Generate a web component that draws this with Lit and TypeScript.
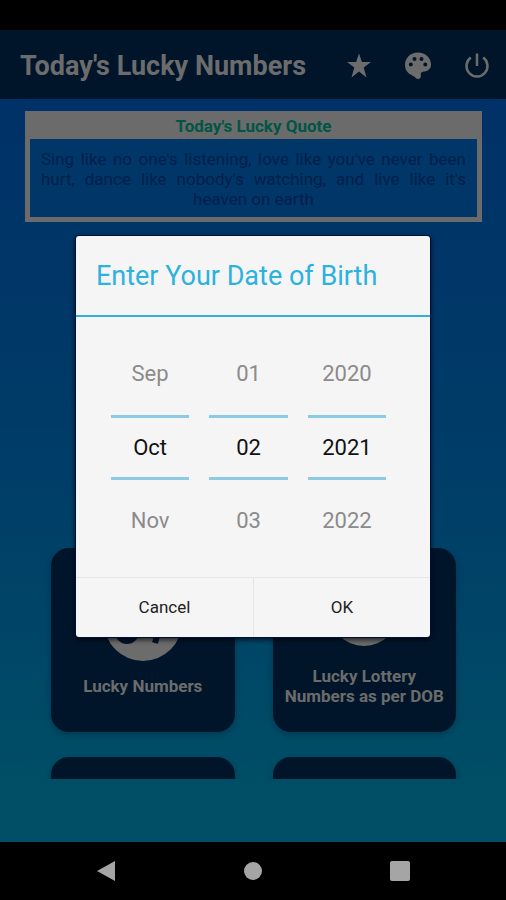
import { LitElement, html, css, svg } from "lit";
import { customElement, state } from "lit/decorators.js";

interface Wheel {
  label: string;
  prev: string;
  value: string;
  next: string;
}

@customElement("date-wheel")
class DateWheel extends LitElement {
  static properties = { wheel: { attribute: false } };
  declare wheel: Wheel;

  static styles = css`
    :host {
      display: flex;
      flex-direction: column;
      min-width: 0;
    }
    .step,
    .value {
      font: 22px "Roboto", sans-serif;
      background: none;
      border: 0;
      padding: 0;
      margin: 0;
      width: 100%;
      box-sizing: border-box;
      text-align: center;
      border-radius: 0;
    }
    .step {
      height: 82px;
      color: #8b8b8b;
    }
    .value {
      height: 65px;
      color: #111;
      border-top: 3px solid #8dcbe4;
      border-bottom: 3px solid #8dcbe4;
      outline: none;
    }
  `;

  render() {
    const w = this.wheel;
    return html`
      <button class="step" aria-label="Previous ${w.label}">${w.prev}</button>
      <input class="value" aria-label=${w.label} .value=${w.value} />
      <button class="step" aria-label="Next ${w.label}">${w.next}</button>
    `;
  }
}

@customElement("app-root")
class AppRoot extends LitElement {
  @state() wheels: Wheel[] = [
    { label: "Month", prev: "Sep", value: "Oct", next: "Nov" },
    { label: "Day", prev: "01", value: "02", next: "03" },
    { label: "Year", prev: "2020", value: "2021", next: "2022" },
  ];

  static styles = css`
    :host {
      display: flex;
      flex-direction: column;
      min-height: 100vh;
      background: #000;
      font-family: "Roboto", sans-serif;
    }
    * {
      box-sizing: border-box;
    }
    button {
      font: inherit;
      border: 0;
      padding: 0;
      margin: 0;
      background: none;
    }
    .status {
      height: 30px;
    }
    .screen {
      flex: 1;
      display: flex;
      flex-direction: column;
      position: relative;
      background: #003168;
    }
    .bar {
      display: flex;
      align-items: center;
      height: 69px;
      padding: 2px 0 0 20px;
      background: #00152a;
      color: #6c6c6c;
    }
    .bar h1 {
      flex: 1;
      margin: 0;
      font-size: 27px;
      line-height: 32px;
      font-weight: 700;
      white-space: nowrap;
    }
    .tool {
      width: 59px;
      height: 59px;
      display: grid;
      place-items: center;
      color: inherit;
    }
    .tool svg {
      width: 28px;
      height: 28px;
      display: block;
    }
    .page {
      flex: 1;
      display: flex;
      flex-direction: column;
      padding: 12px 24px 63px 25px;
      background: linear-gradient(#003168, #003d68 50%, #004f66 95%);
    }
    .quote {
      background: #6b6b6b;
      padding: 0 5px 5px;
    }
    .quote h2 {
      margin: 0;
      padding-top: 2px;
      font-size: 17px;
      line-height: 26px;
      text-align: center;
      color: #005545;
    }
    .quote p {
      margin: 0;
      padding: 10px 11px 8px;
      background: #003668;
      color: #001f4a;
      font-size: 17px;
      line-height: 20px;
      text-align: justify;
      text-align-last: center;
    }
    .cards {
      margin-top: auto;
      height: 231px;
      overflow: hidden;
      display: grid;
      grid-template-columns: 1fr 1fr;
      grid-auto-rows: 184px;
      gap: 25px 38px;
      padding: 0 26px;
    }
    .card {
      display: flex;
      flex-direction: column;
      align-items: center;
      justify-content: center;
      gap: 14px;
      padding: 0 10px 2px;
      border-radius: 18px;
      background: #00152a;
      color: #6c6c6c;
      font-size: 17px;
      line-height: 20px;
      font-weight: 700;
      box-shadow: 0 3px 6px rgba(0, 20, 40, 0.3);
    }
    .card svg {
      width: 80px;
      height: 80px;
    }
    .overlay {
      position: absolute;
      inset: 0;
      display: grid;
      place-items: center;
    }
    .dialog {
      width: 70%;
      background: #f5f5f5;
      border-radius: 3px;
      box-shadow: 0 0 0 1px #00103a, 0 2px 5px 1px rgba(0, 0, 0, 0.7);
    }
    .dialog h2 {
      margin: 0;
      padding: 25px 20px 23px;
      font-size: 27px;
      line-height: 31px;
      font-weight: 400;
      color: #2cb1e1;
      border-bottom: 2px solid #2cb1e1;
      white-space: nowrap;
    }
    .wheels {
      display: grid;
      grid-template-columns: repeat(3, 1fr);
      gap: 20px;
      padding: 16px 44px 15px 35px;
    }
    .actions {
      display: grid;
      grid-template-columns: 1fr 1fr;
      border-top: 1px solid #e6e6e6;
    }
    .actions button {
      height: 59px;
      font-size: 17px;
      color: #222;
    }
    .actions button + button {
      border-left: 1px solid #e6e6e6;
    }
    .nav {
      display: flex;
      justify-content: space-between;
      height: 58px;
      padding: 0 78px;
      color: #a5a5a5;
    }
    .nav button {
      width: 57px;
      display: grid;
      place-items: center;
      color: inherit;
    }
    .nav svg {
      width: 20px;
      height: 20px;
    }
  `;

  private icon(box: string, body: unknown) {
    return html`<svg viewBox=${box} fill="currentColor" aria-hidden="true">${body}</svg>`;
  }

  render() {
    return html`
      <div class="status"></div>
      <main class="screen">
        <header class="bar">
          <h1>Today's Lucky Numbers</h1>
          <button class="tool" aria-label="Favourites">
            ${this.icon("0 0 28 28", svg`<path d="M14 1.500l2.900 8.500h9.100l-7.300 5.500 2.800 10-7.500-6-7.500 6 2.800-10L2 10h9.100z"/>`)}
          </button>
          <button class="tool" aria-label="Theme">
            ${this.icon("0 0 28 28", svg`<path fill-rule="evenodd" d="M14 .5C6.500.5 1 6 1 12.800c0 5 2.500 8.200 6 10 2 1 3.200 1.700 4.500 3 1.200 1.200 2.300 1.500 3.500 1 1.500-.6 2-1.800 1.800-3.300-.2-2 .2-3.500 2-3.700 2-.2 4-.5 5.600-1.800C26.300 16.500 27 15 27 12.500 27 5.500 21.300.5 14 .5zM10.500 5a2 2 0 1 1 0 4 2 2 0 0 1 0-4zM17.500 5a2 2 0 1 1 0 4 2 2 0 0 1 0-4zM6.800 10.500a2 2 0 1 1 0 4 2 2 0 0 1 0-4zM21.300 10.500a2 2 0 1 1 0 4 2 2 0 0 1 0-4z"/>`)}
          </button>
          <button class="tool" aria-label="Exit">
            ${this.icon("0 0 28 28", svg`<path fill="none" stroke="currentColor" stroke-width="2.500" d="M14 1.500v12.500M7.800 5.500a10.500 10.500 0 1 0 12.400 0"/>`)}
          </button>
        </header>
        <div class="page">
          <section class="quote">
            <h2>Today's Lucky Quote</h2>
            <p>Sing like no one's listening, love like you've never been hurt, dance like nobody's watching, and live like it's heaven on earth</p>
          </section>
          <div class="cards">
            <button class="card">
              ${this.icon("0 0 80 80", svg`<circle cx="40" cy="40" r="39" fill="#6c6c6c"/><circle cx="24" cy="50" r="9" fill="none" stroke="#00152a" stroke-width="6"/><circle cx="24" cy="31" r="8" fill="none" stroke="#00152a" stroke-width="6"/><path fill="none" stroke="#00152a" stroke-width="6" d="M44 26h18L52 61"/>`)}
              <span>Lucky Numbers</span>
            </button>
            <button class="card">
              ${this.icon("0 0 80 80", svg`<circle cx="40" cy="39" r="35" fill="#6c6c6c"/>`)}
              <span>Lucky Lottery Numbers as per DOB</span>
            </button>
            <button class="card" aria-label="More numbers"></button>
            <button class="card" aria-label="More predictions"></button>
          </div>
        </div>
        <div class="overlay">
          <section class="dialog" role="dialog" aria-labelledby="dob">
            <h2 id="dob">Enter Your Date of Birth</h2>
            <div class="wheels">
              ${this.wheels.map((w) => html`<date-wheel .wheel=${w}></date-wheel>`)}
            </div>
            <div class="actions">
              <button>Cancel</button>
              <button>OK</button>
            </div>
          </section>
        </div>
      </main>
      <nav class="nav">
        <button aria-label="Back">${this.icon("0 0 20 20", svg`<path d="M0 10L18 0v20z"/>`)}</button>
        <button aria-label="Home">${this.icon("0 0 20 20", svg`<circle cx="10" cy="10" r="9"/>`)}</button>
        <button aria-label="Recent apps">${this.icon("0 0 20 20", svg`<rect width="20" height="20" rx="2"/>`)}</button>
      </nav>
    `;
  }
}
